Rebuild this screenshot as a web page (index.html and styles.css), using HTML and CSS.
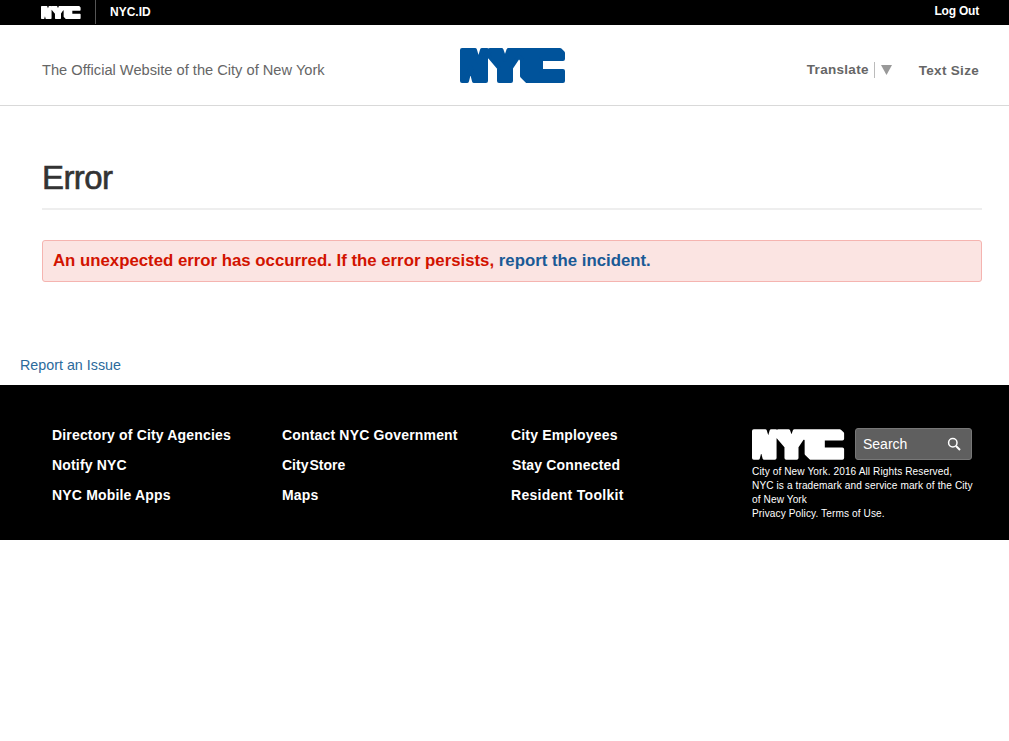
FILE: index.html
```html
<!DOCTYPE html>
<html lang="en">
<head>
<meta charset="utf-8">
<title>Error</title>
<link rel="stylesheet" href="styles.css">
</head>
<body>
<svg class="defs" width="0" height="0" aria-hidden="true">
  <symbol id="nyc" viewBox="0 0 106 35">
    <path d="M2 2H15L18.5 14L22 2H27L28.5 5L30 2H41.5L45 12L48.5 2H100L103 5V11H81V23H103V33H67L62 28V12L59 8L51 20V33H39V20L28 7L26 9V33H14L10.5 19L7 33H2Z" fill="currentColor" stroke="currentColor" stroke-width="4" stroke-linejoin="round"/>
  </symbol>
</svg>
<div class="topbar">
  <div class="top-left">
    <svg class="top-logo"><use href="#nyc"/></svg>
    <a class="top-id" href="#">NYC.ID</a>
  </div>
  <a class="top-logout" href="#">Log Out</a>
</div>
<header class="site-header">
  <div class="tagline">The Official Website of the City of New York</div>
  <svg class="main-logo"><use href="#nyc"/></svg>
  <div class="tools">
    <span class="translate">Translate</span>
    <span class="caret" aria-hidden="true"><svg width="11" height="10" viewBox="0 0 11 10"><path d="M0 0H11L5.5 10Z"/></svg></span>
    <span class="text-size">Text Size</span>
  </div>
</header>
<main class="content">
  <h1 class="title">Error</h1>
  <div class="alert">An unexpected error has occurred. If the error persists, <a href="#">report the incident</a><span class="dot">.</span></div>
</main>
<a class="report" href="#">Report an Issue</a>
<footer class="footer">
  <div class="col col-1">
    <a href="#">Directory of City Agencies</a>
    <a href="#">Notify NYC</a>
    <a href="#">NYC Mobile Apps</a>
  </div>
  <div class="col col-2">
    <a href="#">Contact NYC Government</a>
    <a class="store" href="#">City<span class="tight">Store</span></a>
    <a href="#">Maps</a>
  </div>
  <div class="col col-3">
    <a href="#">City Employees</a>
    <a class="nudge" href="#">Stay Connected</a>
    <a class="wide" href="#">Resident Toolkit</a>
  </div>
  <div class="foot-right">
    <div class="foot-brand">
      <svg class="foot-logo"><use href="#nyc"/></svg>
      <div class="search">
        <span>Search</span>
        <svg width="14" height="14" viewBox="0 0 14 14" fill="none" stroke="#fff"><circle cx="5.8" cy="5.8" r="4.2" stroke-width="1.5"/><path d="M9 9L13 13" stroke-width="2"/></svg>
      </div>
    </div>
    <p class="legal">City of New York. 2016 All Rights Reserved,<br>NYC is a trademark and service mark of the City<br>of New York<br>Privacy Policy. Terms of Use.</p>
  </div>
</footer>
</body>
</html>
```
FILE: styles.css
```css
* { box-sizing: border-box; }
html, body { margin: 0; padding: 0; }
body { background: #fff; font-family: "Liberation Sans", Arial, sans-serif; color: #333; }
a { text-decoration: none; color: inherit; }
.defs { display: block; height: 0; }

.topbar { height: 25px; background: #000; color: #fff; display: flex; justify-content: space-between; align-items: center; padding: 0 30px 0 41px; font-size: 12px; font-weight: 700; }
.top-left { display: flex; align-items: center; height: 25px; }
.top-logo { width: 40px; height: 15px; color: #fff; }
.top-id { height: 24px; line-height: 24px; margin-left: 14px; padding-left: 14px; border-left: 1px solid #555; align-self: flex-start; }
.top-logout { line-height: 22px; align-self: flex-start; letter-spacing: -.2px; }

.site-header { height: 81px; border-bottom: 1px solid #d9d9d9; display: flex; align-items: center; padding: 0 30px 0 42px; }
.tagline { width: 418px; font-size: 14.65px; color: #666; line-height: 18px; padding-top: 9px; }
.main-logo { width: 106px; height: 35px; color: #00539b; margin-top: 1px; }
.tools { margin-left: auto; display: flex; align-items: center; color: #666; font-size: 13.5px; font-weight: 700; letter-spacing: .3px; padding-top: 9px; }
.caret { height: 16px; margin-left: 5px; padding-left: 6px; border-left: 1px solid #bbb; display: flex; align-items: center; fill: #999; }
.text-size { margin-left: 27px; padding-top: 2px; }

.content { padding: 0 27px 0 42px; }
.title { margin: 0; padding: 53px 0 14px; height: 104px; border-bottom: 2px solid #eee; font-size: 33px; line-height: 37px; letter-spacing: -.6px; font-weight: 400; -webkit-text-stroke: .6px #333; color: #333; }
.alert { margin-top: 30px; height: 42px; padding: 0 10px; line-height: 39px; background: #fbe4e2; border: 1px solid #f5b4b0; border-radius: 3px; font-size: 16.8px; font-weight: 700; color: #d21300; }
.alert a, .alert .dot { color: #1a5a96; }

.report { display: block; margin: 74px 0 0 20px; height: 29px; font-size: 14.3px; line-height: 18px; color: #2b6a9b; }

.footer { height: 155px; background: #000; color: #fff; display: flex; padding: 42px 37px 0 52px; }
.col { display: flex; flex-direction: column; font-size: 14px; font-weight: 700; letter-spacing: .17px; line-height: 16px; gap: 14px; }
.col-1 { width: 230px; }
.col-2 { width: 229px; }
.col-3 { width: 241px; }
.nudge { margin-left: 1px; }
.store { letter-spacing: 0; }
.tight { margin-left: 1px; letter-spacing: 0; }
.wide { letter-spacing: .3px; }
.foot-right { width: 220px; margin-top: 1px; }
.foot-brand { display: flex; align-items: center; gap: 10px; height: 32px; }
.foot-logo { width: 93px; height: 31px; color: #fff; }
.search { flex: 1; height: 32px; background: #5f5f5f; border: 1px solid #777; border-radius: 3px; display: flex; align-items: center; justify-content: space-between; padding: 0 10px 0 7px; font-size: 14px; font-weight: 400; letter-spacing: 0; }
.legal { margin: 5px 0 0; font-size: 10.1px; line-height: 14px; font-weight: 400; letter-spacing: .1px; white-space: nowrap; }
```
